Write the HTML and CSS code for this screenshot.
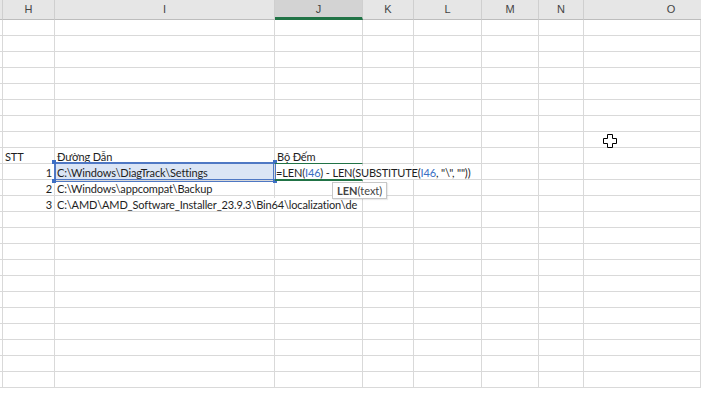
FILE: index.html
```html
<!DOCTYPE html>
<html lang="vi">
<head>
<meta charset="utf-8">
<title>Sheet</title>
<link rel="stylesheet" href="styles.css">
</head>
<body>
<div class="sheet">
  <div class="row head">
    <div class="c"></div><div class="c">H</div><div class="c">I</div><div class="c active">J</div><div class="c">K</div><div class="c">L</div><div class="c">M</div><div class="c">N</div><div class="c">O</div>
  </div>
  <div class="row"><div class="c"></div><div class="c"></div><div class="c"></div><div class="c"></div><div class="c"></div><div class="c"></div><div class="c"></div><div class="c"></div><div class="c"></div></div>
  <div class="row"><div class="c"></div><div class="c"></div><div class="c"></div><div class="c"></div><div class="c"></div><div class="c"></div><div class="c"></div><div class="c"></div><div class="c"></div></div>
  <div class="row"><div class="c"></div><div class="c"></div><div class="c"></div><div class="c"></div><div class="c"></div><div class="c"></div><div class="c"></div><div class="c"></div><div class="c"></div></div>
  <div class="row"><div class="c"></div><div class="c"></div><div class="c"></div><div class="c"></div><div class="c"></div><div class="c"></div><div class="c"></div><div class="c"></div><div class="c"></div></div>
  <div class="row"><div class="c"></div><div class="c"></div><div class="c"></div><div class="c"></div><div class="c"></div><div class="c"></div><div class="c"></div><div class="c"></div><div class="c"></div></div>
  <div class="row"><div class="c"></div><div class="c"></div><div class="c"></div><div class="c"></div><div class="c"></div><div class="c"></div><div class="c"></div><div class="c"></div><div class="c"></div></div>
  <div class="row"><div class="c"></div><div class="c"></div><div class="c"></div><div class="c"></div><div class="c"></div><div class="c"></div><div class="c"></div><div class="c"></div><div class="c"></div></div>
  <div class="row"><div class="c"></div><div class="c"></div><div class="c"></div><div class="c"></div><div class="c"></div><div class="c"></div><div class="c"></div><div class="c"></div><div class="c cursor-cell"><svg class="cursor" width="14" height="14" viewBox="0 0 14 14"><path d="M4.5 0.5h5v4h4v5h-4v4h-5v-4h-4v-5h4z" fill="#fff" stroke="#000" stroke-width="1"/></svg></div></div>
  <div class="row"><div class="c"></div><div class="c t">STT</div><div class="c t">Đường Dẫn</div><div class="c t">Bộ Đếm</div><div class="c"></div><div class="c"></div><div class="c"></div><div class="c"></div><div class="c"></div></div>
  <div class="row"><div class="c"></div><div class="c t num">1</div><div class="c t sel">C:\Windows\DiagTrack\Settings<span class="h tl"></span><span class="h tr"></span><span class="h bl"></span><span class="h br"></span></div><div class="c t edit"><span class="ovt">=LEN(<span class="ref">I46</span>) - LEN(SUBSTITUTE(<span class="ref">I46</span>, "\", ""))</span><div class="tip"><b>LEN</b>(text)</div></div><div class="c"></div><div class="c"></div><div class="c"></div><div class="c"></div><div class="c"></div></div>
  <div class="row"><div class="c"></div><div class="c t num">2</div><div class="c t">C:\Windows\appcompat\Backup</div><div class="c"></div><div class="c"></div><div class="c"></div><div class="c"></div><div class="c"></div><div class="c"></div></div>
  <div class="row"><div class="c"></div><div class="c t num">3</div><div class="c t ov"><span class="ovt">C:\AMD\AMD_Software_Installer_23.9.3\Bin64\localization\de</span></div><div class="c"></div><div class="c"></div><div class="c"></div><div class="c"></div><div class="c"></div><div class="c"></div></div>
  <div class="row"><div class="c"></div><div class="c"></div><div class="c"></div><div class="c"></div><div class="c"></div><div class="c"></div><div class="c"></div><div class="c"></div><div class="c"></div></div>
  <div class="row"><div class="c"></div><div class="c"></div><div class="c"></div><div class="c"></div><div class="c"></div><div class="c"></div><div class="c"></div><div class="c"></div><div class="c"></div></div>
  <div class="row"><div class="c"></div><div class="c"></div><div class="c"></div><div class="c"></div><div class="c"></div><div class="c"></div><div class="c"></div><div class="c"></div><div class="c"></div></div>
  <div class="row"><div class="c"></div><div class="c"></div><div class="c"></div><div class="c"></div><div class="c"></div><div class="c"></div><div class="c"></div><div class="c"></div><div class="c"></div></div>
  <div class="row"><div class="c"></div><div class="c"></div><div class="c"></div><div class="c"></div><div class="c"></div><div class="c"></div><div class="c"></div><div class="c"></div><div class="c"></div></div>
  <div class="row"><div class="c"></div><div class="c"></div><div class="c"></div><div class="c"></div><div class="c"></div><div class="c"></div><div class="c"></div><div class="c"></div><div class="c"></div></div>
  <div class="row"><div class="c"></div><div class="c"></div><div class="c"></div><div class="c"></div><div class="c"></div><div class="c"></div><div class="c"></div><div class="c"></div><div class="c"></div></div>
  <div class="row"><div class="c"></div><div class="c"></div><div class="c"></div><div class="c"></div><div class="c"></div><div class="c"></div><div class="c"></div><div class="c"></div><div class="c"></div></div>
  <div class="row"><div class="c"></div><div class="c"></div><div class="c"></div><div class="c"></div><div class="c"></div><div class="c"></div><div class="c"></div><div class="c"></div><div class="c"></div></div>
  <div class="row"><div class="c"></div><div class="c"></div><div class="c"></div><div class="c"></div><div class="c"></div><div class="c"></div><div class="c"></div><div class="c"></div><div class="c"></div></div>
  <div class="row"><div class="c"></div><div class="c"></div><div class="c"></div><div class="c"></div><div class="c"></div><div class="c"></div><div class="c"></div><div class="c"></div><div class="c"></div></div>
</div>
</body>
</html>
```

FILE: styles.css
```css
html, body {
  margin: 0;
  padding: 0;
  background: #fff;
  overflow: hidden;
}
.sheet {
  width: 701px;
  overflow: hidden;
  font-family: Lato, "Liberation Sans", sans-serif;
  font-size: 11px;
  color: #1e1e1e;
}
.row {
  display: grid;
  grid-template-columns: 3px 52px 220px 88px 51px 68px 57px 45px 1fr;
  height: 16px;
}
.c {
  box-sizing: border-box;
  border-right: 1px solid #d9d9d9;
  border-bottom: 1px solid #d9d9d9;
  height: 16px;
  position: relative;
  white-space: nowrap;
}
.head {
  height: 20px;
  background: #e6e6e6;
}
.head .c {
  height: 20px;
  border-right: 1px solid #cfcfcf;
  border-bottom: 1px solid #bdbdbd;
  text-align: center;
  line-height: 19px;
  font-family: "Liberation Sans", sans-serif;
  font-size: 11px;
  color: #444;
}
.head .c:last-child {
  width: 175px;
}
.head .c.active {
  background: #d3d3d3;
  border-bottom: 3px solid #217346;
  line-height: 18px;
}
.t {
  padding-left: 2px;
  line-height: 17px;
  letter-spacing: -0.15px;
}
.num {
  text-align: right;
  padding: 0 2px 0 0;
}
.ov {
  z-index: 1;
}
.ovt {
  background: #fff;
  padding-right: 1px;
}
.sel {
  background: #dbe5f5;
  box-shadow: inset 0 0 0 1px #4f78c4;
  outline: 1px solid #4f78c4;
  margin-top: -1px;
  height: 18px;
  line-height: 19px;
  z-index: 2;
}
.h {
  position: absolute;
  width: 4px;
  height: 4px;
  background: #3d6fc4;
}
.tl { left: -3px; top: -3px; }
.tr { right: -3px; top: -3px; }
.bl { left: -3px; bottom: -3px; }
.br { right: -3px; bottom: -3px; }
.edit {
  overflow: visible;
  margin-top: -1px;
  height: 18px;
  line-height: 18px;
  border-top: 1px solid #217346;
  border-bottom: 2px solid #217346;
  z-index: 3;
  padding-left: 1px;
}
.ref {
  color: #3a6fc4;
}
.tip {
  position: absolute;
  left: 57px;
  top: 18px;
  height: 15px;
  padding: 0 4px;
  background: #fff;
  border: 1px solid #c8c8c8;
  line-height: 15px;
  font-size: 11px;
  letter-spacing: 0;
  color: #444;
  box-shadow: 1px 1px 1px rgba(0,0,0,0.08);
}
.tip b {
  font-weight: bold;
  color: #444;
}
.cursor-cell {
  overflow: visible;
}
.cursor {
  position: absolute;
  left: 19px;
  top: 2px;
}
```
